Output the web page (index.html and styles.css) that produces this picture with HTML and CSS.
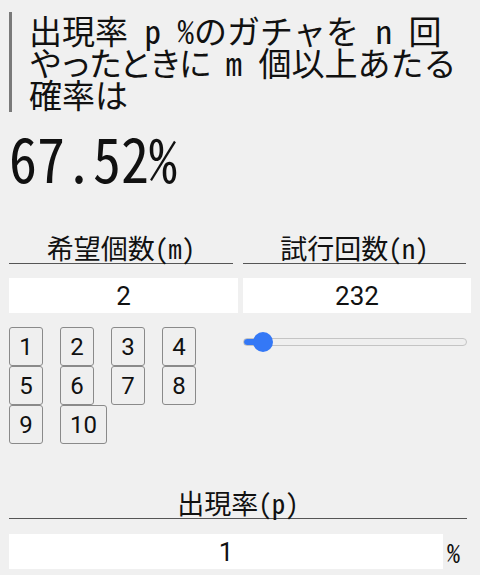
FILE: index.html
```html
<!DOCTYPE html>
<html lang="ja">
<head>
<meta charset="utf-8">
<link rel="stylesheet" href="styles.css">
</head>
<body>
<h1 class="title"><span class="line">出現率 p %のガチャを n 回</span><span class="line"><span class="tight">やったときに</span> m 個以上あたる</span><span class="line">確率は</span></h1>
<div class="result"><span class="result-num">67.52%</span></div>
<div class="cols">
  <div class="col">
    <div class="label">希望個数(m)</div>
    <input class="field" type="text" value="2">
    <div class="keys">
      <button class="key">1</button>
      <button class="key">2</button>
      <button class="key">3</button>
      <button class="key">4</button>
      <button class="key">5</button>
      <button class="key">6</button>
      <button class="key">7</button>
      <button class="key">8</button>
      <button class="key">9</button>
      <button class="key">10</button>
    </div>
  </div>
  <div class="col">
    <div class="label">試行回数(n)</div>
    <input class="field" type="text" value="232">
    <input class="slider" type="range" min="1" max="5000" value="232">
  </div>
</div>
<div class="rate">
  <div class="label wide">出現率(p)</div>
  <div class="rate-row">
    <input class="field" type="text" value="1">
    <span class="unit">%</span>
  </div>
</div>
</body>
</html>
```
FILE: styles.css
```css
html, body {
  margin: 0;
  padding: 0;
  background: #f0f0f0;
}
body {
  padding: 12px 9px 0 9px;
  font-family: "Noto Sans Mono CJK JP", "Noto Sans CJK JP", sans-serif;
  color: #111;
}
.title {
  margin: 0;
  border-left: 3px solid #7a7a7a;
  padding: 2px 0 2px 17px;
  font-size: 33px;
  font-weight: normal;
  white-space: nowrap;
}
.line {
  display: block;
  height: 32px;
  line-height: 32px;
}
.tight {
  letter-spacing: -3px;
}
.result {
  font-size: 56px;
  line-height: 60px;
  margin-top: 16px;
}
.result-num {
  display: inline-block;
  transform: scaleY(1.1);
  transform-origin: 0 75%;
}
.cols {
  display: grid;
  grid-template-columns: 229px 228px;
  column-gap: 5px;
  margin-top: 45px;
}
.label {
  font-size: 27px;
  line-height: 30px;
  text-align: center;
  border-bottom: 1px solid #555;
  margin-right: 5px;
}
.field {
  display: block;
  box-sizing: border-box;
  width: 100%;
  height: 35px;
  margin: 14px 0 0 0;
  border: none;
  background: #fff;
  text-align: center;
  font-family: Roboto, sans-serif;
  font-size: 26px;
  color: #111;
  padding: 0;
  outline: none;
}
.keys {
  display: flex;
  flex-wrap: wrap;
  column-gap: 17px;
  margin-top: 14px;
}
.key {
  box-sizing: border-box;
  height: 39px;
  min-width: 34px;
  padding: 0 9px;
  border: 1px solid #8a8a8a;
  border-radius: 3px;
  background: #efefef;
  font-family: Roboto, sans-serif;
  font-size: 24px;
  color: #111;
}
.slider {
  -webkit-appearance: none;
  appearance: none;
  display: block;
  width: 224px;
  height: 20px;
  margin: 19px 0 0 0;
  padding: 0;
  background: transparent;
}
.slider::-webkit-slider-runnable-track {
  height: 8px;
  border-radius: 4px;
  border: 1px solid #c4c4c4;
  box-sizing: border-box;
  background: linear-gradient(to right, #3478f6 0, #3478f6 20px, #efefef 20px);
}
.slider::-webkit-slider-thumb {
  -webkit-appearance: none;
  width: 20px;
  height: 20px;
  border-radius: 50%;
  background: #3478f6;
  margin-top: -7px;
  border: none;
}
.rate {
  margin-top: 44px;
}
.label.wide {
  margin-right: 4px;
}
.rate-row {
  display: flex;
  align-items: center;
}
.rate-row .field {
  width: 434px;
}
.unit {
  font-size: 26px;
  margin: 14px 0 0 4px;
}
```
